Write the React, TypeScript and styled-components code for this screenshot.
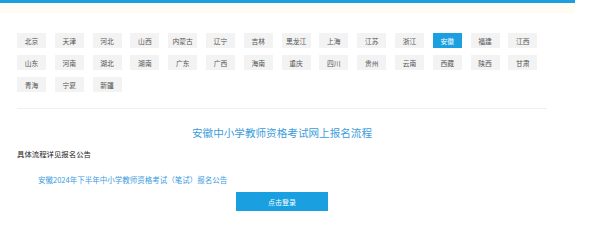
import styled, { createGlobalStyle } from "styled-components"

const provinces = [
    "北京", "天津", "河北", "山西", "内蒙古", "辽宁", "吉林", "黑龙江", "上海", "江苏", "浙江", "安徽", "福建", "江西",
    "山东", "河南", "湖北", "湖南", "广东", "广西", "海南", "重庆", "四川", "贵州", "云南", "西藏", "陕西", "甘肃",
    "青海", "宁夏", "新疆",
]

const GlobalStyle = createGlobalStyle`
    body {
        margin: 0;
        background: #fff;
        font-family: "Noto Sans CJK SC", "Noto Sans", sans-serif;
    }
`

const App = () => {
    return (
        <>
            <GlobalStyle />
            <TopBar />
            <Notice />
            <Wrapper>
                <TagGrid>
                    {provinces.map((name) => (
                        <Tag key={name} active={name === "安徽"}>{name}</Tag>
                    ))}
                </TagGrid>
                <Divider />
                <Title>安徽中小学教师资格考试网上报名流程</Title>
                <SubTitle>具体流程详见报名公告</SubTitle>
                <NoticeLink href="#">安徽2024年下半年中小学教师资格考试（笔试）报名公告</NoticeLink>
                <ButtonRow>
                    <LoginButton>点击登录</LoginButton>
                </ButtonRow>
            </Wrapper>
        </>
    )
}

const TopBar = styled.div`
    width: 575px;
    height: 3px;
    background: #1a9fe0;
`

const Notice = styled.div`
    width: 575px;
    height: 10px;
    background: #fffdf3;
`

const Wrapper = styled.div`
    width: 530px;
    padding: 20px 0 0 17px;
    display: flex;
    flex-direction: column;
`

const TagGrid = styled.div`
    display: grid;
    grid-template-columns: repeat(14, 29px);
    column-gap: 8.8px;
    row-gap: 7px;
`

const Tag = styled.span<{ active?: boolean }>`
    height: 15px;
    display: flex;
    align-items: center;
    justify-content: center;
    font-size: 6.8px;
    color: ${(p) => (p.active ? "#fff" : "#555")};
    background: ${(p) => (p.active ? "#1a9fe0" : "#f3f3f3")};
`

const Divider = styled.div`
    height: 1px;
    margin-top: 16px;
    background: #f0f0f0;
`

const Title = styled.h2`
    margin: 16px 0 0;
    font-size: 10.6px;
    line-height: 16px;
    font-weight: normal;
    text-align: center;
    color: #3c9ddb;
`

const SubTitle = styled.p`
    margin: 8px 0 0;
    font-size: 7.4px;
    line-height: 10px;
    color: #222;
`

const NoticeLink = styled.a`
    margin: 16px 0 0 21px;
    font-size: 7.5px;
    line-height: 10px;
    color: #3a9be0;
    text-decoration: none;
`

const ButtonRow = styled.div`
    display: flex;
    justify-content: center;
    margin-top: 7px;
`

const LoginButton = styled.button`
    width: 92px;
    height: 19px;
    border: none;
    padding: 0;
    background: #1a9fe0;
    color: #fff;
    font-family: inherit;
    font-size: 7px;
`

export default App
